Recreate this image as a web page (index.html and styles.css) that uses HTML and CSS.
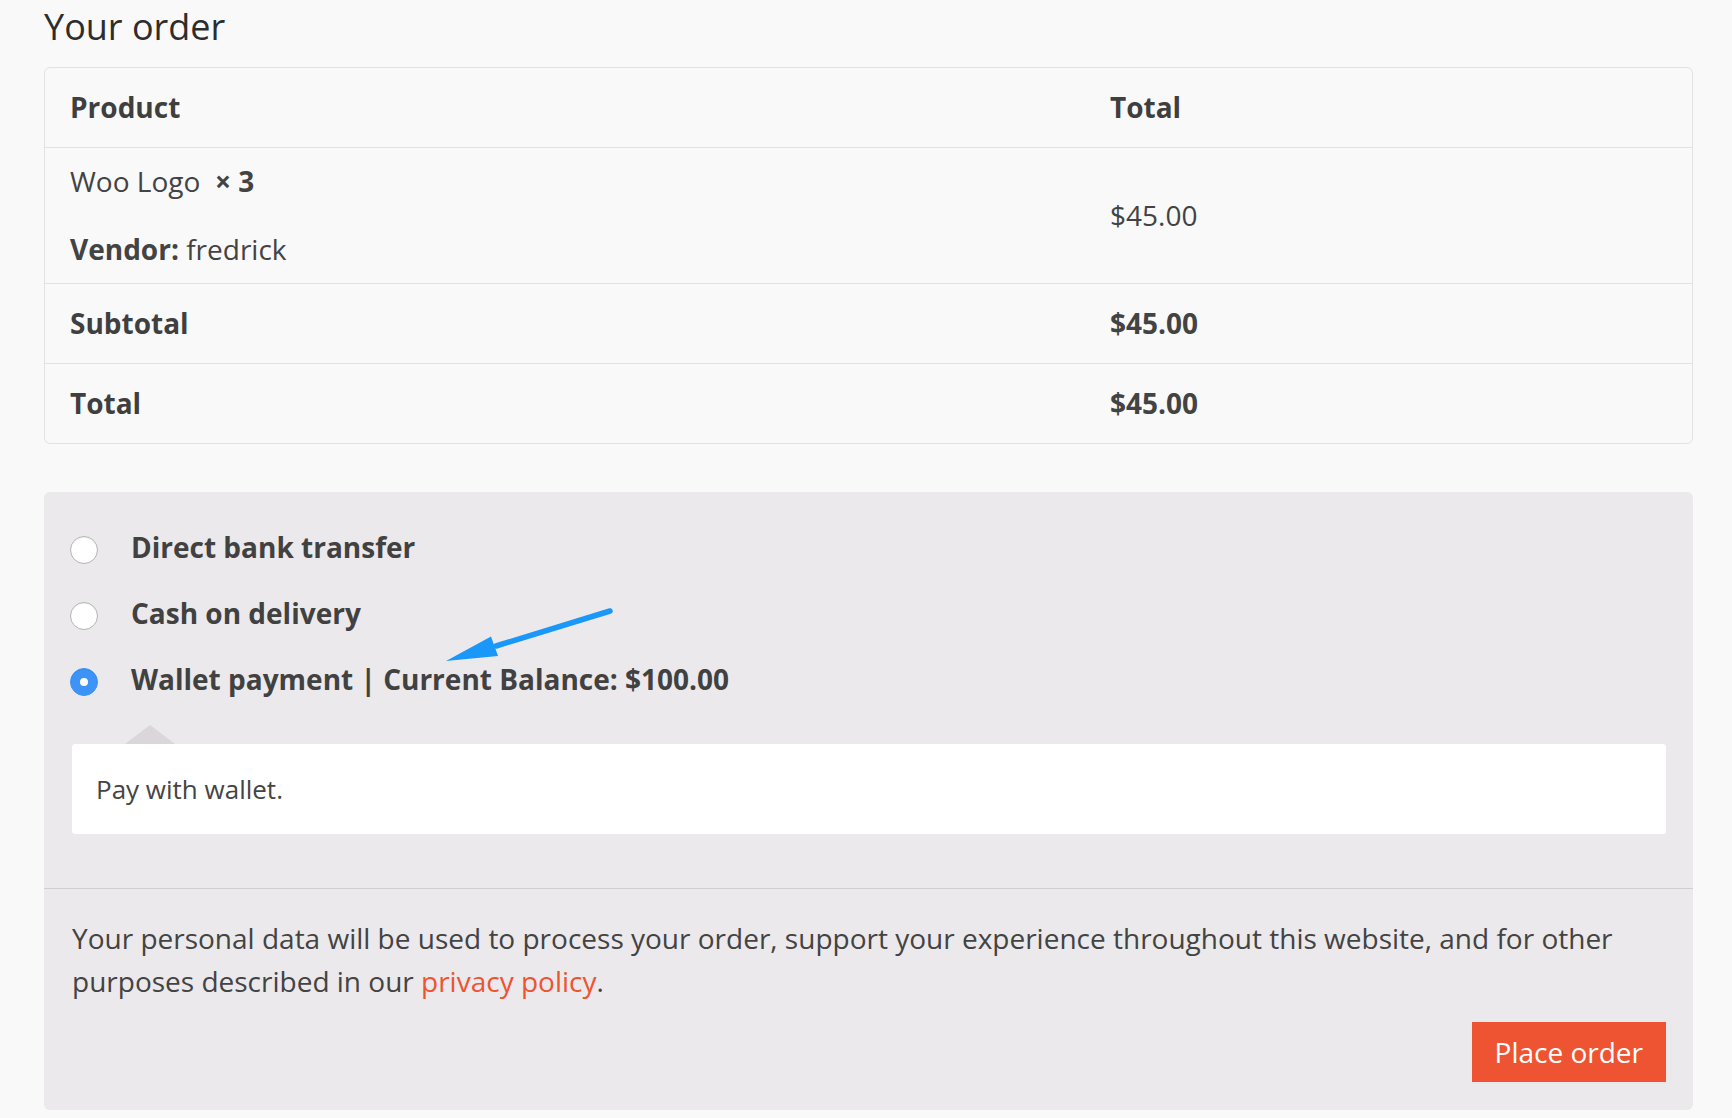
FILE: index.html
```html
<!DOCTYPE html>
<html lang="en">
<head>
<meta charset="utf-8">
<title>Your order</title>
<link rel="stylesheet" href="styles.css">
</head>
<body>
<div class="page">
  <h3 class="order-heading">Your order</h3>
  <table class="order-table">
    <colgroup><col class="col-product"><col class="col-total"></colgroup>
    <thead>
      <tr><th>Product</th><th>Total</th></tr>
    </thead>
    <tbody>
      <tr class="item-row">
        <td>
          <div class="item-name">Woo Logo&nbsp; <strong>×&nbsp;3</strong></div>
          <div class="item-meta"><strong>Vendor:</strong> fredrick</div>
        </td>
        <td class="amount">$45.00</td>
      </tr>
    </tbody>
    <tfoot>
      <tr><th>Subtotal</th><td class="bold">$45.00</td></tr>
      <tr class="last"><th>Total</th><td class="bold">$45.00</td></tr>
    </tfoot>
  </table>

  <div class="payment">
    <ul class="methods">
      <li class="method"><span class="radio"></span><label>Direct bank transfer</label></li>
      <li class="method"><span class="radio"></span><label>Cash on delivery</label></li>
      <li class="method"><span class="radio checked"></span><label>Wallet payment | Current Balance: $100.00</label></li>
      <li class="payment-box"><p>Pay with wallet.</p></li>
    </ul>
    <div class="place-order">
      <p class="privacy">Your personal data will be used to process your order, support your experience throughout this website, and for other purposes described in our <a href="#" class="link">privacy policy</a>.</p>
      <div class="actions"><button class="btn" type="button">Place order</button></div>
    </div>
    <svg class="arrow" viewBox="396 108 180 70" width="180" height="70" aria-hidden="true">
      <line x1="566" y1="119" x2="452" y2="154" stroke="#1a98fa" stroke-width="5.5" stroke-linecap="round"/>
      <polygon points="402,169 447,144.5 454,164" fill="#1a98fa"/>
    </svg>
  </div>
</div>
</body>
</html>
```

FILE: styles.css
```css
* { box-sizing: border-box; }
html, body { margin: 0; padding: 0; }
body {
  background: #f9f9f9;
  font-family: "Open Sans", "Noto Sans", sans-serif;
  color: #434343;
}
.page {
  padding: 0 39px 0 44px;
  width: 1732px;
}
.order-heading {
  margin: 2px 0 16px;
  font-size: 36px;
  line-height: 49px;
  font-weight: 400;
  color: #2d2d2d;
}
.order-table {
  width: 100%;
  border: 1px solid #e2e2e2;
  border-radius: 6px;
  border-spacing: 0;
  border-collapse: separate;
  table-layout: fixed;
  font-size: 28px;
  line-height: 45px;
}
.col-product { width: 1040px; }
.order-table th,
.order-table td {
  text-align: left;
  padding: 17px 25px 17px 25px;
  border-bottom: 1px solid #e2e2e2;
  vertical-align: middle;
}
.order-table th { font-weight: 700; color: #3f3f3f; }
.order-table td { font-weight: 400; }
.order-table td.bold { font-weight: 700; }
.order-table tr.last th,
.order-table tr.last td { border-bottom: 0; }
.item-row td { padding-top: 11px; padding-bottom: 11px; }
.item-meta { margin-top: 23px; }

.payment {
  position: relative;
  margin-top: 48px;
  background: #ebe9eb;
  border-radius: 6px;
}
.methods {
  list-style: none;
  margin: 0;
  padding: 33px 27px 54px 28px;
  border-bottom: 1px solid #d3ced2;
}
.method {
  display: flex;
  align-items: flex-start;
  font-size: 28px;
  line-height: 45px;
  font-weight: 700;
  color: #414141;
  margin-bottom: 21px;
}
.method:last-of-type { margin-bottom: 0; }
.radio {
  flex: none;
  width: 28px;
  height: 28px;
  margin: 11px 33px 0 -2px;
  border-radius: 50%;
  background: #fff;
  border: 1px solid #b4b4b4;
  box-shadow: inset 0 1px 1px rgba(0,0,0,0.06);
}
.radio.checked {
  background: #3d94f6;
  border-color: #3d94f6;
  position: relative;
}
.radio.checked::after {
  content: "";
  position: absolute;
  left: 50%;
  top: 50%;
  width: 8px;
  height: 8px;
  margin: -4px 0 0 -4px;
  border-radius: 50%;
  background: #fff;
}
.payment-box {
  position: relative;
  margin-top: 42px;
  background: #fff;
  border-radius: 3px;
  padding: 24px 24px;
  font-size: 26px;
  line-height: 42px;
  color: #444;
}
.payment-box::before {
  content: "";
  position: absolute;
  left: 53px;
  top: -19px;
  border-left: 25px solid transparent;
  border-right: 25px solid transparent;
  border-bottom: 19px solid #dad6da;
}
.payment-box p { margin: 0; }
.place-order {
  padding: 28px 27px 28px 28px;
}
.privacy {
  margin: 0;
  font-size: 28px;
  line-height: 43px;
  color: #434343;
}
.link { color: #ef5430; text-decoration: none; }
.actions {
  margin-top: 19px;
  display: flex;
  justify-content: flex-end;
}
.btn {
  height: 60px;
  padding: 0 23px;
  border: 0;
  border-radius: 0;
  background: #ee5431;
  color: #fff;
  font-family: "Open Sans", "Noto Sans", sans-serif;
  font-size: 28px;
  font-weight: 400;
}
.arrow {
  position: absolute;
  left: 396px;
  top: 108px;
}
```
